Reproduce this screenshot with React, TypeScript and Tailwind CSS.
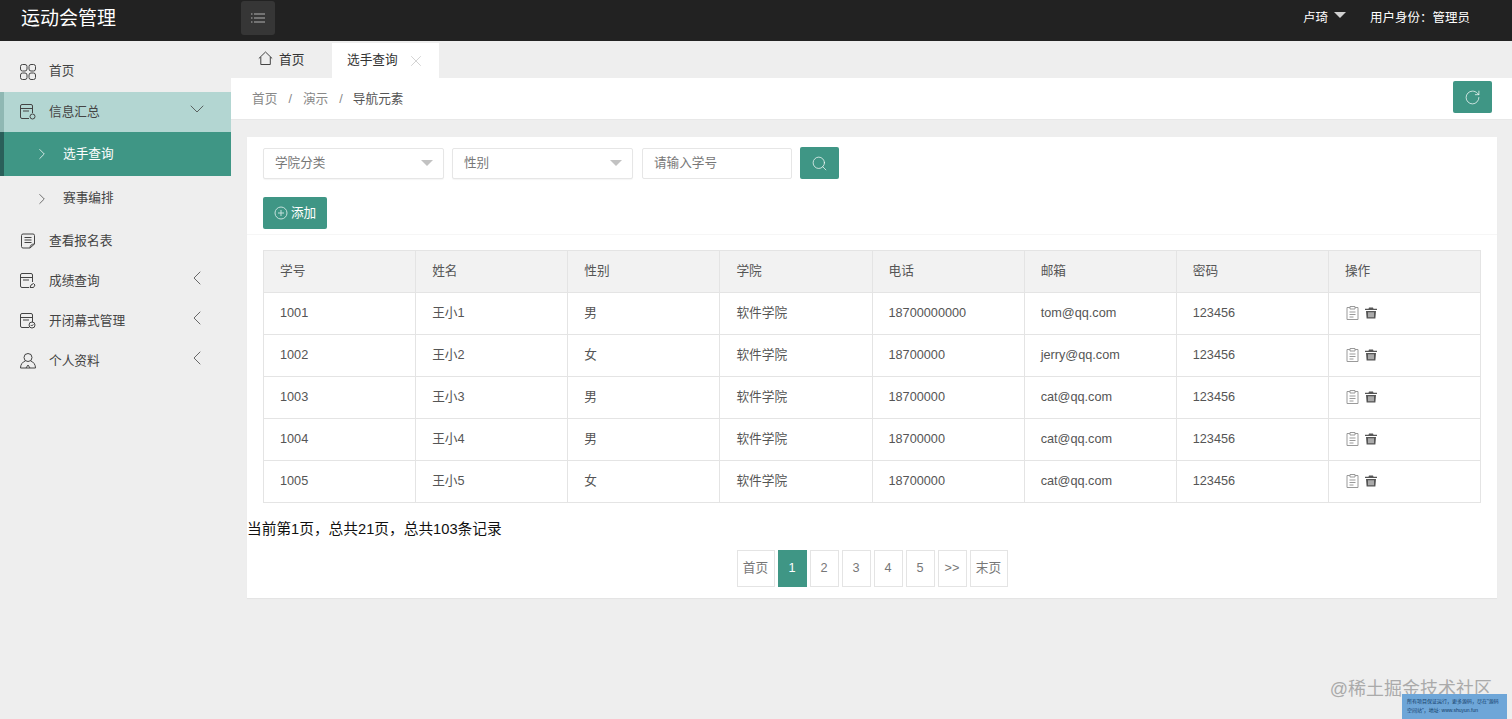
import { ChevronDown, ChevronLeft, ChevronRight, RotateCw, Search, X } from 'lucide-react';
import type { ReactNode } from 'react';

const font = { fontFamily: '"Liberation Sans", "Noto Sans CJK SC", sans-serif' };

function Glyph({ children, size = 18 }: { children: ReactNode; size?: number }) {
  return (
    <svg width={size} height={size} viewBox="0 0 18 18" fill="none" stroke="currentColor" strokeWidth="1" className="flex-none">
      {children}
    </svg>
  );
}

const GridIcon = () => (
  <Glyph>
    <rect x="1.5" y="1.5" width="6.500" height="6.500" rx="2" />
    <rect x="10" y="1.5" width="6.500" height="6.500" rx="2" />
    <rect x="1.5" y="10" width="6.500" height="6.500" rx="2" />
    <rect x="10" y="10" width="6.500" height="6.500" rx="2" />
  </Glyph>
);

const FormIcon = ({ mark }: { mark: ReactNode }) => (
  <Glyph>
    <path d="M10 15.5H3a1.5 1.5 0 0 1-1.5-1.5V3A1.5 1.5 0 0 1 3 1.5h9A1.5 1.5 0 0 1 13.500 3v7" />
    <path d="M1.500 5.500h12M4 8h6" />
    {mark}
  </Glyph>
);

const ListIcon = () => (
  <Glyph>
    <path d="M11 16H4a1.500 1.500 0 0 1-1.500-1.500v-11A1.500 1.500 0 0 1 4 2h10a1.500 1.500 0 0 1 1.500 1.500V12z" />
    <path d="M5.500 5.500h7M5.500 8h7M5.500 10.500h7M11 16c0-2.500 1.500-4 4.500-4" />
  </Glyph>
);

const UserIcon = () => (
  <Glyph>
    <circle cx="9" cy="5.500" r="4" />
    <path d="M6.200 9C3.500 10 1.500 12.500 1.500 16h15c0-3.500-2-6-4.700-7M7 16l2-3 2 3" />
  </Glyph>
);

type MenuRow = { label: string; icon: ReactNode; arrow?: boolean };

const lowerMenu: MenuRow[] = [
  { label: '查看报名表', icon: <ListIcon /> },
  {
    label: '成绩查询',
    icon: <FormIcon mark={<path d="M11 15.500l1-2.500 2.500-1.500 1.500 1.500-1.500 2.500z" />} />,
    arrow: true,
  },
  {
    label: '开闭幕式管理',
    icon: <FormIcon mark={<><circle cx="13" cy="13" r="3" /><path d="M11.700 13l1 1 1.700-1.700" /></>} />,
    arrow: true,
  },
  { label: '个人资料', icon: <UserIcon />, arrow: true },
];

const columns = ['学号', '姓名', '性别', '学院', '电话', '邮箱', '密码', '操作'];

const students = [
  { id: '1001', name: '王小1', sex: '男', phone: '18700000000', mail: 'tom@qq.com' },
  { id: '1002', name: '王小2', sex: '女', phone: '18700000', mail: 'jerry@qq.com' },
  { id: '1003', name: '王小3', sex: '男', phone: '18700000', mail: 'cat@qq.com' },
  { id: '1004', name: '王小4', sex: '男', phone: '18700000', mail: 'cat@qq.com' },
  { id: '1005', name: '王小5', sex: '女', phone: '18700000', mail: 'cat@qq.com' },
];

const pages = ['首页', '1', '2', '3', '4', '5', '>>', '末页'];

function Sidebar() {
  return (
    <aside className="w-[231px] flex-none bg-[#eeeeee] pt-[10px] text-[12.7px] text-[#444444]">
      <div className="flex h-[41px] items-center pl-[19px]">
        <GridIcon />
        <span className="ml-[12px] mt-[1px]">首页</span>
      </div>
      <div className="flex h-10 items-center border-l-4 border-[#8fb8b3] bg-[#b3d6d2] pl-[15px] pr-[22px]">
        <FormIcon mark={<circle cx="13.500" cy="13.500" r="2.500" />} />
        <span className="ml-[12px] mt-[1px] flex-1">信息汇总</span>
        <ChevronDown size={24} strokeWidth={0.8} className="-mt-[6px]" />
      </div>
      <div className="flex h-[44px] items-center border-l-4 border-[#2a5f5a] bg-[#3f9685] pl-[29px] text-white">
        <ChevronRight size={18} strokeWidth={1} />
        <span className="ml-[12px] mt-[1px]">选手查询</span>
      </div>
      <div className="flex h-[45px] items-center pl-[33px]">
        <ChevronRight size={18} strokeWidth={1} />
        <span className="ml-[12px] mt-[1px]">赛事编排</span>
      </div>
      {lowerMenu.map((row) => (
        <div key={row.label} className="flex h-10 items-center pl-[19px] pr-[22px]">
          {row.icon}
          <span className="ml-[12px] mt-[2px] flex-1">{row.label}</span>
          {row.arrow && <ChevronLeft size={24} strokeWidth={0.8} className="-mt-[6px]" />}
        </div>
      ))}
    </aside>
  );
}

function SelectBox({ label }: { label: string }) {
  return (
    <div className="flex h-[31px] w-[181px] items-center justify-between rounded-[2px] border border-[#e6e6e6] bg-white pl-[11px] pr-[10px] text-[#777777] shadow-[0_1px_1px_rgba(0,0,0,0.04)]">
      {label}
      <span className="h-0 w-0 border-x-[6px] border-t-[6px] border-x-transparent border-t-[#c2c2c2]" />
    </div>
  );
}

function StudentTable() {
  return (
    <table className="w-full table-fixed border-collapse border border-[#e4e4e4] text-[12.7px] text-[#555555]">
      <thead>
        <tr className="h-[42px] bg-[#f2f2f2]">
          {columns.map((col) => (
            <th key={col} className="border border-[#e4e4e4] pl-4 text-left font-normal">
              {col}
            </th>
          ))}
        </tr>
      </thead>
      <tbody>
        {students.map((s) => (
          <tr key={s.id} className="h-[42px]">
            <td className="border border-[#e4e4e4] pl-4">{s.id}</td>
            <td className="border border-[#e4e4e4] pl-4">{s.name}</td>
            <td className="border border-[#e4e4e4] pl-4">{s.sex}</td>
            <td className="border border-[#e4e4e4] pl-4">软件学院</td>
            <td className="border border-[#e4e4e4] pl-4">{s.phone}</td>
            <td className="border border-[#e4e4e4] pl-4">{s.mail}</td>
            <td className="border border-[#e4e4e4] pl-4">123456</td>
            <td className="border border-[#e4e4e4] pl-4">
              <div className="-mt-[1px] ml-px flex items-center gap-[6px]">
                <svg width="13" height="14" viewBox="0 0 13 14" fill="none" stroke="#9a9a9a" strokeWidth="1">
                  <path d="M4 1.500H1v12h11v-12H9M4 .500h5v2.500H4zM3.500 6h6M3.500 8.500h6M3.500 11h4" />
                </svg>
                <svg width="12" height="12" viewBox="0 0 12 12" fill="#555555">
                  <path d="M4 .5h4l.5 1.300H12v1.200H0V1.800h3.500zM1 4h10l-.6 7.500H1.600zm2.500 1.300v5h1v-5zm2 0v5h1v-5zm2 0v5h1v-5z" />
                </svg>
              </div>
            </td>
          </tr>
        ))}
      </tbody>
    </table>
  );
}

export default function App() {
  return (
    <div style={font} className="relative flex h-[719px] w-[1512px] flex-col overflow-hidden bg-[#eeeeee] text-[12.6px]">
      <header className="flex h-[41px] flex-none items-center bg-[#222222] text-white">
        <div className="-mt-[2px] w-[241px] pl-[21px] text-[19px]">运动会管理</div>
        <button className="-mt-[5px] flex h-[34px] w-[34px] items-center justify-center rounded-[3px] bg-[#363636] text-[#b0b0b0]">
          <svg width="16" height="12" viewBox="0 0 16 12" stroke="currentColor" strokeWidth="1.200">
            <path d="M1 2h1.500M1 6h1.500M1 10h1.500M4 2h11M4 6h11M4 10h11" />
          </svg>
        </button>
        <div className="-mt-[5px] ml-auto flex items-center pr-[42px] text-[12.5px]">
          <span>卢琦</span>
          <span className="mb-[6px] ml-[6px] h-0 w-0 border-x-[6px] border-t-[6px] border-x-transparent border-t-[#d0d0d0]" />
          <span className="ml-[24px]">用户身份：管理员</span>
        </div>
      </header>

      <div className="flex flex-1">
        <Sidebar />
        <main className="flex-1">
          <div className="flex h-[37px] pt-[2px] text-[12.7px] text-[#333333]">
            <div className="flex w-[101px] items-center pl-[27px]">
              <svg width="15" height="15" viewBox="0 0 15 15" fill="none" stroke="#444444" strokeWidth="1" className="-mt-1 mr-[6px]">
                <path d="M.8 7.500 7.500 1l6.700 6.500M2.800 6v7.500h9.500V6" />
              </svg>
              首页
            </div>
            <div className="flex w-[107px] items-center bg-white pl-[15px]">
              选手查询
              <X size={18} strokeWidth={0.8} className="ml-[9px] text-[#b5b5b5]" />
            </div>
          </div>

          <div className="flex h-[42px] items-center justify-between border-b border-[#e8e8e8] bg-white pl-[21px] pr-[21px] text-[12.7px] text-[#888888]">
            <div className="mt-[2px] flex items-center">
              <span>首页</span>
              <span className="mx-[11px]">/</span>
              <span>演示</span>
              <span className="ml-[11px] mr-[10px]">/</span>
              <span className="text-[#555555]">导航元素</span>
            </div>
            <button className="-mt-[3px] flex h-[32px] w-[39px] items-center justify-center rounded-[2px] bg-[#3f9685] text-white">
              <RotateCw size={17} strokeWidth={1} />
            </button>
          </div>

          <section className="mx-[16px] mt-[17px] h-[461px] w-[1250px] bg-white pt-[10px] shadow-[0_1px_1px_rgba(0,0,0,0.04)]">
            <div className="flex items-center px-4">
              <SelectBox label="学院分类" />
              <div className="ml-2">
                <SelectBox label="性别" />
              </div>
              <div className="ml-[9px] flex h-[31px] w-[150px] items-center rounded-[2px] border border-[#e6e6e6] pl-[11px] text-[#777777]">
                请输入学号
              </div>
              <button className="ml-[8px] flex h-[32px] w-[39px] items-center justify-center rounded-[2px] bg-[#3f9685] text-white">
                <Search size={17} strokeWidth={1} />
              </button>
            </div>

            <div className="mt-[18px] border-b border-[#f6f6f6] px-4 pb-[5px]">
              <button className="flex h-[32px] w-[64px] items-center justify-center gap-[3px] rounded-[2px] bg-[#3f9685] text-white">
                <svg width="14" height="14" viewBox="0 0 14 14" fill="none" stroke="#c6e0dc" strokeWidth="1">
                  <circle cx="7" cy="7" r="6" />
                  <path d="M7 4v6M4 7h6" />
                </svg>
                添加
              </button>
            </div>

            <div className="mt-[15px] px-4">
              <StudentTable />
            </div>

            <p className="mt-[16px] text-[14.7px] leading-[20px] text-[#111111]">当前第1页，总共21页，总共103条记录</p>

            <div className="mt-[11px] flex justify-center gap-[3px] text-[12.7px] text-[#777777]">
              {pages.map((page) => (
                <span
                  key={page}
                  className={
                    page === '1'
                      ? 'flex h-[37px] w-[29px] items-center justify-center bg-[#3f9685] pt-px text-white'
                      : page.length === 2 && page !== '>>'
                        ? 'flex h-[37px] w-[38px] items-center justify-center border border-[#e4e4e4] pt-px'
                        : 'flex h-[37px] w-[29px] items-center justify-center border border-[#e4e4e4] pt-px'
                  }
                >
                  {page}
                </span>
              ))}
            </div>
          </section>
        </main>
      </div>

      <div className="absolute bottom-[17px] right-[20px] text-[18px] leading-[26px] text-[#aaaaaa]">@稀土掘金技术社区</div>
      <div className="absolute bottom-0 right-[5px] h-[25px] w-[105px] bg-[#6ea6d8] px-[5px] pt-[3px] text-[5px] leading-[9px] text-[#123a66]">
        所有项目保证运行，更多源码，尽在"源码空间站"，地址: www.shuyun.fun
      </div>
    </div>
  );
}
